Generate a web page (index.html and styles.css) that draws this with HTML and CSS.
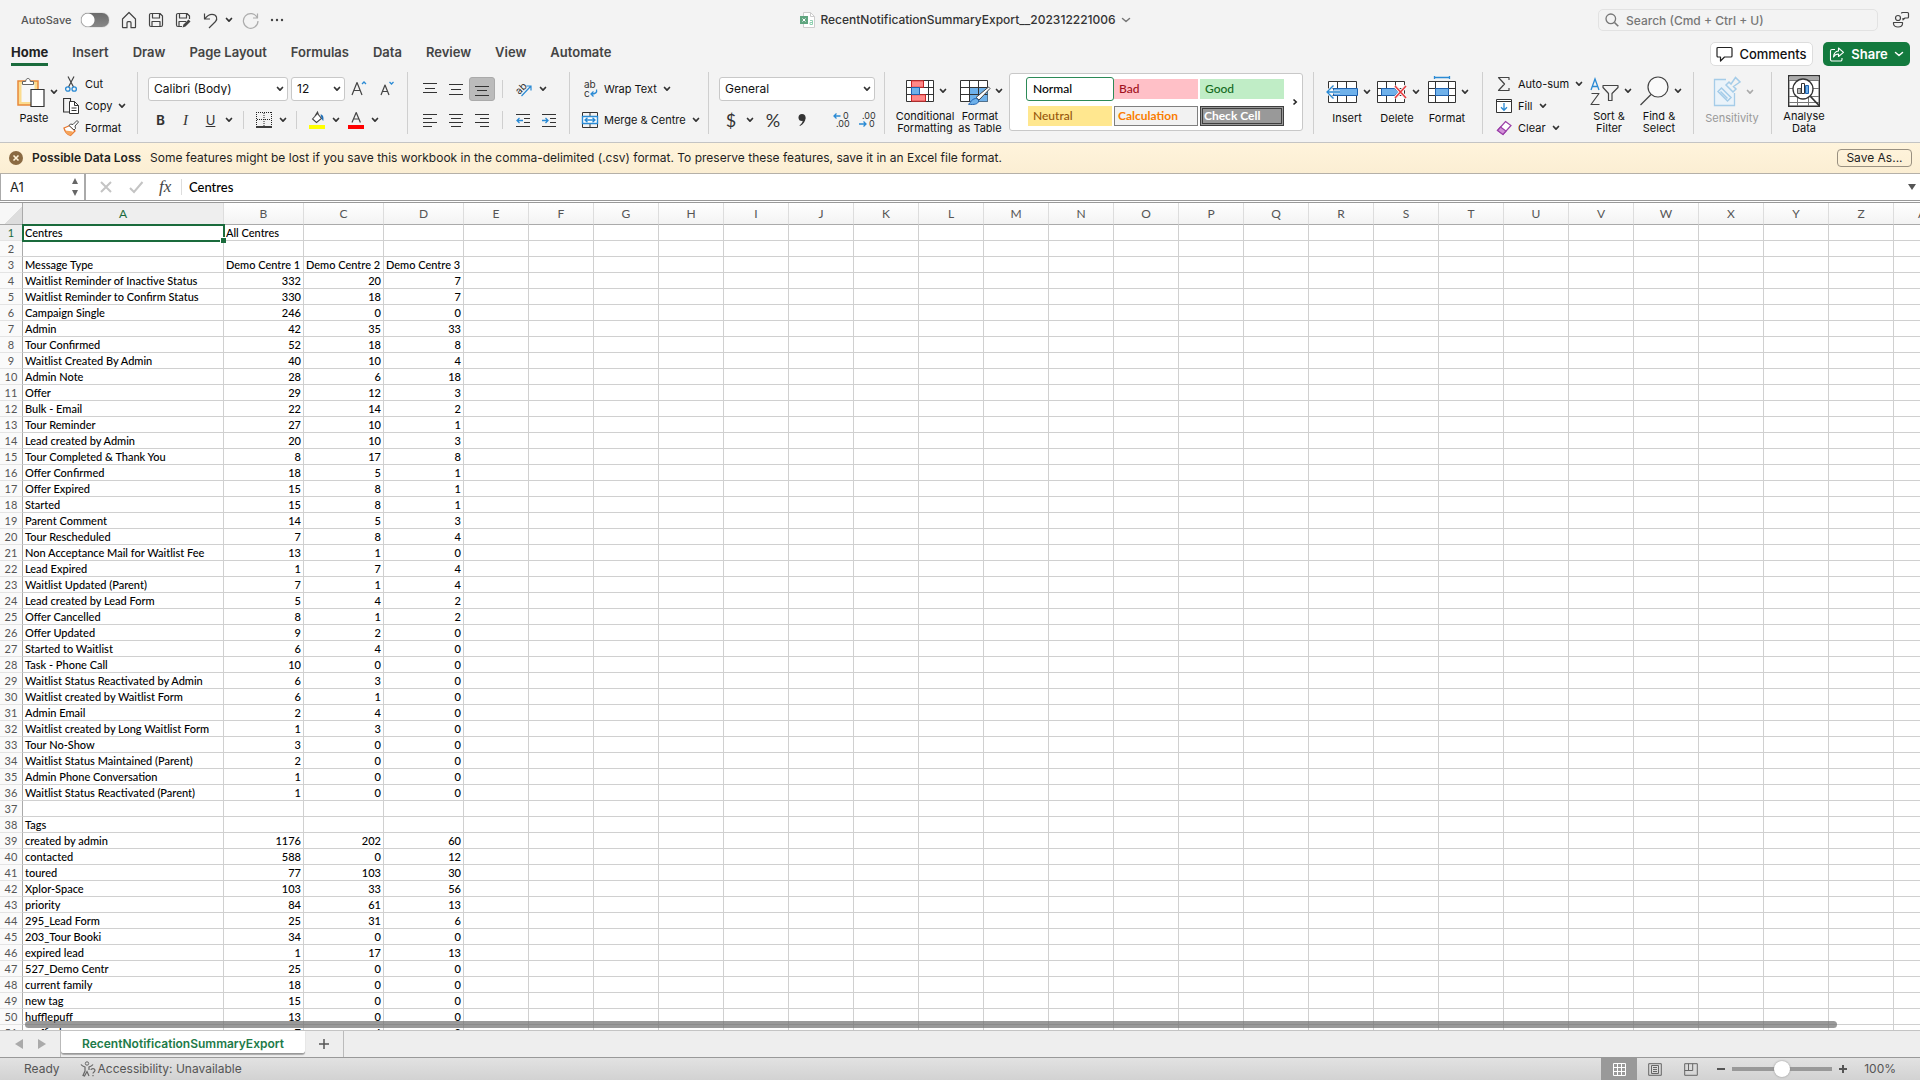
FILE: index.html
```html
<!DOCTYPE html>
<html lang="en">
<head>
<meta charset="utf-8">
<title>RecentNotificationSummaryExport__202312221006</title>
<link rel="stylesheet" href="styles.css">
</head>
<body>
<svg class="defs" aria-hidden="true">
  <symbol id="chev" viewBox="0 0 8 6"><path d="M1.500 1.500 4 4.200 6.500 1.500" fill="none" stroke="currentColor" stroke-width="1.700" stroke-linecap="round" stroke-linejoin="round"/></symbol>
  <symbol id="chev-thin" viewBox="0 0 10 6"><path d="M1.500 1.500 5 4.500 8.500 1.500" fill="none" stroke="currentColor" stroke-width="1.500" stroke-linecap="round" stroke-linejoin="round"/></symbol>
</svg>

<header class="titlebar">
  <div class="quick">
    <label class="autosave" for="autosave">AutoSave</label>
    <input class="toggle" id="autosave" type="checkbox">
    <button class="plain" aria-label="Home"><svg width="16" height="18" viewBox="0 0 16 18"><path d="M1.500 8 8 1.500 14.500 8v8a.7.7 0 0 1-.7.7H10v-5a1 1 0 0 0-1-1H7a1 1 0 0 0-1 1v5H2.200a.7.7 0 0 1-.7-.7z" class="ln"/></svg></button>
    <button class="plain" aria-label="Save"><svg width="16" height="16" viewBox="0 0 16 16"><path d="M1.500 3a1.500 1.500 0 0 1 1.500-1.500h9L14.500 4v9a1.500 1.500 0 0 1-1.500 1.500H3A1.500 1.500 0 0 1 1.500 13zM4.500 1.500V6h7V1.500M4 14.500v-5h8v5" class="ln"/></svg></button>
    <button class="plain" aria-label="Save as"><svg width="17" height="16" viewBox="0 0 17 16"><path d="M7 14.500H3A1.500 1.500 0 0 1 1.500 13V3A1.500 1.500 0 0 1 3 1.500h9L14.500 4v3M4.500 1.500V6h7V1.500M4 14.500v-5h7" class="ln"/><path d="M7.500 15.500l1-3 5-5 2 2-5 5z" fill="#444"/></svg></button>
    <button class="plain undo" aria-label="Undo"><svg width="15" height="17" viewBox="0 0 15 17"><path d="M1.500 1.500v5.500h5.500M1.700 6.800C4 3.800 6.500 2.300 9 2.300c4.800 0 6 4.700 3.300 7.500L6 16" class="ln"/></svg><svg class="chev"><use href="#chev"/></svg></button>
    <button class="plain dim" aria-label="Redo"><svg width="17" height="17" viewBox="0 0 17 17"><path d="M15.500 1.500V6H11M15.300 5.800A7.300 7.300 0 1 0 16 9" class="ln"/></svg></button>
    <button class="plain" aria-label="More"><svg width="14" height="4" viewBox="0 0 14 4" fill="#444"><circle cx="2" cy="2" r="1.200"/><circle cx="7" cy="2" r="1.200"/><circle cx="12" cy="2" r="1.200"/></svg></button>
  </div>
  <button class="doc">
    <svg width="15" height="16" viewBox="0 0 15 16"><path d="M3.500.5h7l4 4v11h-11z" fill="#fff" stroke="#ccc"/><path d="M10.500.5v4h4" fill="none" stroke="#ccc"/><path d="M10 8.500h2.500v4H10v-2h2.500" fill="none" stroke="#8fd0b0"/><rect y="4" width="8" height="8" fill="#5fa57f"/><path d="m2.500 6.500 3 3m0-3-3 3" stroke="#fff"/></svg>
    <span>RecentNotificationSummaryExport__202312221006</span>
    <svg class="chev-thin"><use href="#chev-thin"/></svg>
  </button>
  <div class="find">
    <div class="search">
      <svg width="14" height="14" viewBox="0 0 14 14"><circle cx="5.800" cy="5.800" r="4.800" fill="none" stroke="#777" stroke-width="1.300"/><path d="m9.500 9.500 3.800 3.800" stroke="#777" stroke-width="1.600"/></svg>
      <input type="search" aria-label="Search" placeholder="Search (Cmd + Ctrl + U)">
    </div>
    <button class="plain" aria-label="Presence"><svg width="18" height="18" viewBox="0 0 18 18"><circle cx="6" cy="7" r="2.500" class="ln"/><path d="M1.500 11.500h9v1c0 2.200-2 3.500-4.500 3.500s-4.500-1.300-4.500-3.500zM9.500 2.500a1 1 0 0 1 1-1h5a1 1 0 0 1 1 1V6a1 1 0 0 1-1 1H13l-2 1.800V7" class="ln"/></svg></button>
  </div>
</header>

<nav class="tabs">
  <a class="tab on" href="#home">Home</a><a class="tab" href="#insert">Insert</a><a class="tab" href="#draw">Draw</a><a class="tab" href="#layout">Page Layout</a><a class="tab" href="#formulas">Formulas</a><a class="tab" href="#data">Data</a><a class="tab" href="#review">Review</a><a class="tab" href="#view">View</a><a class="tab" href="#automate">Automate</a>
  <div class="actions">
    <button class="comments"><svg width="17" height="16" viewBox="0 0 17 16"><path d="M2 1.500h13a1 1 0 0 1 1 1V10a1 1 0 0 1-1 1H8.500L4.500 15v-4H2a1 1 0 0 1-1-1V2.500a1 1 0 0 1 1-1z" fill="none" stroke="#222" stroke-width="1.200" stroke-linejoin="round"/></svg>Comments</button>
    <button class="share"><svg width="16" height="15" viewBox="0 0 16 15"><path d="M6 2.500H3A1.500 1.500 0 0 0 1.500 4v8.500A1.500 1.500 0 0 0 3 14h8.500a1.500 1.500 0 0 0 1.500-1.500V11M9.500 1l5 4.300-5 4.200V7C7 7 5.500 8 4.500 10c.3-3.500 2-5.700 5-6z" fill="none" stroke="#fff" stroke-width="1.100" stroke-linejoin="round"/></svg>Share<svg class="chev-thin"><use href="#chev-thin"/></svg></button>
  </div>
</nav>

<section class="ribbon" aria-label="Home ribbon">
  <div class="group clipboard">
    <button class="big">
      <span class="pic"><svg width="28" height="32" viewBox="0 0 28 32"><rect x="1" y="5" width="20" height="24" fill="#fbdc8f" stroke="#e8883a" stroke-width="1.500"/><path d="M4.500 8h13v18h-13z" fill="#f7f7f7"/><path d="M5.500 8.500v-3h3.200c0-2 1-3 2.300-3s2.300 1 2.300 3h3.200v3z" fill="#fff" stroke="#666"/><path d="M14 13.500h13v17H14z" fill="#fff" stroke="#333" stroke-width="1.200"/></svg><svg class="chev"><use href="#chev"/></svg></span>
      <span>Paste</span>
    </button>
    <div class="stack">
      <button class="line"><svg width="16" height="18" viewBox="0 0 16 18"><path d="M5 1.500 10.500 12M11 1.500 5.500 12" stroke="#444" fill="none" stroke-width="1.200"/><circle cx="4.800" cy="14" r="2.200" fill="none" stroke="#2a8ad4" stroke-width="1.300"/><circle cx="11.200" cy="14" r="2.200" fill="none" stroke="#2a8ad4" stroke-width="1.300"/></svg>Cut</button>
      <button class="line"><svg width="16" height="18" viewBox="0 0 16 18"><path d="M6 15H.600V1.500H7.500V4" stroke="#333" fill="none" stroke-width="1.100"/><path d="M6.500 4.500h5l4 4v8h-9zM11.500 4.500v4h4M8.500 11h5M8.500 13.500h5" fill="#fff" stroke="#333"/></svg>Copy<svg class="chev"><use href="#chev"/></svg></button>
      <button class="line"><svg width="16" height="18" viewBox="0 0 16 18"><path d="M1 9 7 6.500l5 5.500-4.500 4.500C4.500 15.500 2 13 1 9z" fill="#fff" stroke="#e8772e" stroke-width="1.300"/><path d="M2 11.500c3 .5 6 0 8.500 1.500l-3 3.500c-2.500-.5-4.500-2.500-5.500-5z" fill="#f5a55c"/><path d="m6 6.500 1.500-1.500 2.500.500 4-4 1.500 1.500-3.500 4 .500 2.500-1.500 1.500z" fill="#fff" stroke="#444"/></svg>Format</button>
    </div>
  </div>

  <div class="group font">
    <div class="row">
      <span class="pick name"><select aria-label="Font"><option>Calibri (Body)</option></select><svg class="chev"><use href="#chev"/></svg></span>
      <span class="pick size"><select aria-label="Font size"><option>12</option></select><svg class="chev"><use href="#chev"/></svg></span>
      <button class="glyph wide" aria-label="Increase font size"><svg width="16" height="18" viewBox="0 0 16 18"><path d="M1 15 6 2.500 11 15M2.800 10.500h6.400" class="ln"/><path d="m11 4 2-2 2 2" fill="none" stroke="#2a8ad4" stroke-width="1.300"/></svg></button>
      <button class="glyph wide" aria-label="Decrease font size"><svg width="16" height="18" viewBox="0 0 16 18"><path d="M2 15 6 5l4 10M3.500 11.500h5" class="ln"/><path d="m10.500 2 2 2 2-2" fill="none" stroke="#2a8ad4" stroke-width="1.300"/></svg></button>
    </div>
    <div class="row">
      <button class="glyph b">B</button><button class="glyph i">I</button><button class="glyph u">U</button><button class="glyph tiny" aria-label="Underline styles"><svg class="chev"><use href="#chev"/></svg></button>
      <span class="sep"></span>
      <button class="glyph split" aria-label="Borders"><svg width="16" height="16" viewBox="0 0 16 16"><path d="M.500 0v14M0 .500h16M15.500 0v14M8 1v13M1 7.500h14" stroke="#222" stroke-dasharray="1 1" fill="none"/><path d="M0 15h16" stroke="#000" stroke-width="1.500"/></svg><svg class="chev"><use href="#chev"/></svg></button>
      <span class="sep"></span>
      <button class="glyph split" aria-label="Fill colour"><svg width="16" height="18" viewBox="0 0 16 18"><path d="m3.500 8 5-5.500 4 5-5 4zM6 5l2.500-4 1 3" fill="#fff" stroke="#444" stroke-width="1.100"/><path d="M11.500 3.500c2.500 0 3.500 2.500 2.800 6.500-1-1-2-2.500-1.800-3z" fill="#1f6fb8"/><path fill="#ff0" d="M0 14h16v4H0z"/></svg><svg class="chev"><use href="#chev"/></svg></button>
      <button class="glyph split" aria-label="Font colour"><svg width="16" height="18" viewBox="0 0 16 18"><path d="M4 11.500 8.200 1.500l4.200 10M5.500 8h5.500" class="ln"/><path fill="#f00" d="M0 14h16v4H0z"/></svg><svg class="chev"><use href="#chev"/></svg></button>
    </div>
  </div>

  <div class="group align">
    <div class="row">
      <button class="glyph al" aria-label="Top align"><svg width="14" height="14"><path d="M0 1.500h14M2 6.500h10M0 10.500h14" class="bar"/></svg></button>
      <button class="glyph al" aria-label="Middle align"><svg width="14" height="14"><path d="M0 2.500h14M2 7.500h10M0 12.500h14" class="bar"/></svg></button>
      <button class="glyph al on" aria-label="Bottom align"><svg width="14" height="14"><path d="M0 4.500h14M2 8.500h10M0 13.500h14" class="bar"/></svg></button>
      <span class="sep"></span>
      <button class="glyph split" aria-label="Orientation"><svg width="16" height="16" viewBox="0 0 16 16"><text x="0" y="12" font-size="10" transform="rotate(-45 4 9)" fill="#333">ab</text><path d="m5.500 15 9-9.500M10.500 5h4.500v4.500" fill="none" stroke="#2a8ad4" stroke-width="1.200"/></svg><svg class="chev"><use href="#chev"/></svg></button>
    </div>
    <div class="row">
      <button class="glyph al" aria-label="Align left"><svg width="14" height="14"><path d="M0 1.500h14M0 5.500h9M0 9.500h14M0 13.500h9" class="bar"/></svg></button>
      <button class="glyph al" aria-label="Centre"><svg width="14" height="14"><path d="M0 1.500h14M2 5.500h10M0 9.500h14M2 13.500h10" class="bar"/></svg></button>
      <button class="glyph al" aria-label="Align right"><svg width="14" height="14"><path d="M0 1.500h14M5 5.500h9M0 9.500h14M5 13.500h9" class="bar"/></svg></button>
      <span class="sep"></span>
      <button class="glyph al" aria-label="Decrease indent"><svg width="14" height="14"><path d="M0 1.500h14M8 5.500h6M8 9.500h6M0 13.500h14" class="bar"/><path d="M7 7.500H1M3.500 5 1 7.500 3.500 10" class="blue"/></svg></button>
      <button class="glyph al" aria-label="Increase indent"><svg width="14" height="14"><path d="M0 1.500h14M8 5.500h6M8 9.500h6M0 13.500h14" class="bar"/><path d="M0 7.500h6M3.500 5 6 7.500 3.500 10" class="blue"/></svg></button>
    </div>
  </div>

  <div class="group wrap">
    <button class="line"><svg width="16" height="18" viewBox="0 0 16 18"><text x="2" y="8" font-size="10" fill="#333">ab</text><text x="2" y="17" font-size="10" fill="#333">c</text><path d="M14.500 9.500c.8 3-1 4.500-5.500 4.500M11.500 11.500 9 14l2.500 2.500" class="blue"/></svg>Wrap Text<svg class="chev"><use href="#chev"/></svg></button>
    <button class="line"><svg width="16" height="16" viewBox="0 0 16 16"><path d="M.500.500h15v15H.500zM8 .500V4M8 12v3.500" fill="none" stroke="#333"/><path d="M.500 4.500h15v7H.500z" fill="#fff" stroke="#2a8ad4" stroke-width="1.400"/><path d="M3 8h10M5.500 5.800 3 8l2.500 2.200M10.500 5.800 13 8l-2.500 2.200" class="blue"/></svg>Merge &amp; Centre<svg class="chev"><use href="#chev"/></svg></button>
  </div>

  <div class="group number">
    <span class="pick fmt"><select aria-label="Number format"><option>General</option></select><svg class="chev"><use href="#chev"/></svg></span>
    <div class="row">
      <button class="glyph sym split">$<svg class="chev"><use href="#chev"/></svg></button>
      <button class="glyph sym">%</button>
      <button class="glyph" aria-label="Comma style"><svg width="10" height="14" viewBox="0 0 10 14"><circle cx="5" cy="4.500" r="3.500" fill="#333"/><path d="M8.500 4.500c0 4-2 6.500-5.500 8.500l-.5-.8C4.500 11 6 9 6 6z" fill="#333"/></svg></button>
      <span class="sep"></span>
      <button class="glyph dec" aria-label="Increase decimal"><svg width="16" height="16" viewBox="0 0 16 16"><text x="10" y="7" font-size="9" fill="#333">0</text><text x="3" y="15" font-size="9" fill="#333">.00</text><path d="M7.500 4H1M3.500 1.500 1 4l2.500 2.500" class="blue"/></svg></button>
      <button class="glyph dec" aria-label="Decrease decimal"><svg width="16" height="16" viewBox="0 0 16 16"><text x="3" y="7" font-size="9" fill="#333">.00</text><text x="10" y="15" font-size="9" fill="#333">0</text><path d="M0 12h7M4.500 9.500 7 12l-2.500 2.500" class="blue"/></svg></button>
    </div>
  </div>

  <div class="group styles">
    <button class="big w60">
      <span class="pic"><svg width="28" height="24" viewBox="0 0 28 24"><path d="M.500 1.500h27v21H.500zM.500 8.500h27M.500 15.500h27M5.500 1v22M22.500 1v22" fill="#fff" stroke="#333"/><path d="M5.500 1.800h12v6.500h-12zM5.500 15.700h14v6.500h-14z" fill="#f88" stroke="#c22"/><path d="M5.500 8.500h8v7h-8z" fill="#6fb1ea" stroke="#1f62b0"/></svg><svg class="chev"><use href="#chev"/></svg></span>
      <span>Conditional<br>Formatting</span>
    </button>
    <button class="big w50">
      <span class="pic"><svg width="30" height="28" viewBox="0 0 30 28"><path d="M.500 3.500h27v21H.500z" fill="#fff" stroke="#333"/><path d="M9.500 10.500h18v14h-18z" fill="#6fb1ea"/><path d="M.500 10.500h27M.500 17.500h27M9.500 3v22M18.500 3v22" fill="none" stroke="#333"/><path d="M28.500 10 30 11.500 19 23l-3-2.500z" fill="#fff" stroke="#444"/><path d="M15.500 21.500c2 0 3.500 1.500 3 3-.6 2.500-4 3.500-10 2.700 2.500-1.200 2-4.700 7-5.700z" fill="#6fb1ea" stroke="#1f62b0"/></svg><svg class="chev"><use href="#chev"/></svg></span>
      <span>Format<br>as Table</span>
    </button>
    <div class="gallery">
      <div class="swatches">
        <button class="sw normal">Normal</button><button class="sw bad">Bad</button><button class="sw good">Good</button>
        <button class="sw neutral">Neutral</button><button class="sw calc">Calculation</button><button class="sw check">Check Cell</button>
      </div>
      <button class="plain next" aria-label="More styles"><svg width="6" height="8" viewBox="0 0 6 8"><path d="M1.500 1.500 4.200 4 1.500 6.500" fill="none" stroke="#222" stroke-width="1.600"/></svg></button>
    </div>
  </div>

  <div class="group cells">
    <button class="big w50">
      <span class="pic"><svg width="32" height="24" viewBox="0 0 32 24"><path d="M2.500 1.500h28v21h-28zM2.500 8.500h28M2.500 15.500h28M11.500 1v22M20.500 1v22" fill="#fff" stroke="#333"/><path d="M7.500 8.500h24v7h-24z" fill="#6fb1ea" stroke="#1f62b0"/><path d="M14 12H1.500M7.500 5.500 1 12l6.500 6.500" fill="none" stroke="#f3f3f3" stroke-width="3"/><path d="M14 12H1.500M7.500 5.500 1 12l6.500 6.500" class="blue"/></svg><svg class="chev"><use href="#chev"/></svg></span>
      <span>Insert</span>
    </button>
    <button class="big w50">
      <span class="pic"><svg width="30" height="24" viewBox="0 0 30 24"><path d="M.500 1.500h27v21H.500zM.500 8.500h27M.500 15.500h27M9.500 1v22M18.500 1v22" fill="#fff" stroke="#333"/><path d="M4.500 8.500h13l4 3.500-4 3.500h-13z" fill="#6fb1ea" stroke="#1f62b0"/><path d="m18 6 11 12M29 6 18 18" stroke="#f3f3f3" stroke-width="3.500"/><path d="m18 6 11 12M29 6 18 18" stroke="#e8383d" stroke-width="1.500"/></svg><svg class="chev"><use href="#chev"/></svg></span>
      <span>Delete</span>
    </button>
    <button class="big w50">
      <span class="pic"><svg width="28" height="32" viewBox="0 0 28 32"><path d="M.500 5.500h27v21H.500zM.500 12.500h27M.500 19.500h27M7.500 5v22M20.500 5v22" fill="#fff" stroke="#333"/><path d="M7.500 12.500h13v7h-13z" fill="#6fb1ea" stroke="#1f62b0"/><path d="M6.500 1.500h15M6.500 0v3M21.500 0v3" class="blue"/></svg><svg class="chev"><use href="#chev"/></svg></span>
      <span>Format</span>
    </button>
  </div>

  <div class="group editing">
    <div class="stack">
      <button class="line"><svg width="16" height="16" viewBox="0 0 16 16"><path d="M13 4V1.500H2.500L8.500 8l-6 6.500H13V12" class="ln"/></svg>Auto-sum<svg class="chev"><use href="#chev"/></svg></button>
      <button class="line"><svg width="16" height="16" viewBox="0 0 16 16"><path d="M.500 1.500h15v13H.500z" fill="#fff" stroke="#333"/><path d="M.500 3.500h15" stroke="#333"/><path d="M8 5v7M5 9.300l3 3 3-3" class="blue"/></svg>Fill<svg class="chev"><use href="#chev"/></svg></button>
      <button class="line"><svg width="16" height="16" viewBox="0 0 16 16"><path d="m9.500 1.500 5.500 4-8 9-5.500-4z" fill="#fff" stroke="#9b3fa8" stroke-width="1.200"/><path d="m4.500 7 5.500 4-3 3.500-5.500-4z" fill="#d292d8" stroke="#9b3fa8" stroke-width="1.200"/></svg>Clear<svg class="chev"><use href="#chev"/></svg></button>
    </div>
    <button class="big w50">
      <span class="pic"><svg width="29" height="30" viewBox="0 0 29 30"><path d="m1 14 4-11 4 11M2.500 10.500h5" fill="none" stroke="#2a8ad4" stroke-width="1.300"/><path d="M1.500 17.500H9L1 28.500h8.500" class="ln"/><path d="M13 9.500h15v2l-6 6v7h-3.500v-7l-5.500-6z" class="ln"/></svg><svg class="chev"><use href="#chev"/></svg></span>
      <span>Sort &amp;<br>Filter</span>
    </button>
    <button class="big w50">
      <span class="pic"><svg width="29" height="30" viewBox="0 0 29 30"><circle cx="18" cy="11" r="10" fill="#fff" fill-opacity=".6" stroke="#444" stroke-width="1.200"/><path d="M11 18.500.500 29" class="ln"/></svg><svg class="chev"><use href="#chev"/></svg></span>
      <span>Find &amp;<br>Select</span>
    </button>
  </div>

  <div class="group sens">
    <button class="big w50" disabled>
      <span class="pic"><svg width="28" height="32" viewBox="0 0 28 32"><path d="M13 3.500H1.500v26h20V17" fill="#eaf3fa" stroke="#a5cce8" stroke-width="1.300"/><path d="M5 15.500 8.500 12l9.500 9.500-3.500 3.500zM7.500 15.500l7 7M10 13.500l6.500 6.500M13 9l3-3 2 2 4.500-6.500 4.500 4.500-6.500 4.500 2.500 2.500-3 3z" fill="none" stroke="#a5cce8" stroke-width="1.500"/></svg><svg class="chev"><use href="#chev"/></svg></span>
      <span>Sensitivity</span>
    </button>
  </div>

  <div class="group analyse">
    <button class="big w50">
      <span class="pic"><svg width="32" height="32" viewBox="0 0 32 32"><path d="M.700.700h30.600v30.600H.700z" fill="#fff" stroke="#333" stroke-width="1.400"/><path d="M1.500 1.500h29v4h-29z" fill="#aaa"/><path d="M1 5.500h30M1 13.500h30M1 21.500h30M1 27.500h30M9.500 21v10M20.500 21v10" stroke="#777"/><circle cx="15" cy="14" r="10" fill="#fff" stroke="#333" stroke-width="1.300"/><path d="m22.500 21.500 9 9.500" stroke="#333" stroke-width="1.800"/><path d="M9.500 13.500h3.500v5H9.500z" fill="#bbb" stroke="#555"/><path d="M13.500 8.500h3v10h-3z" fill="#fff" stroke="#333"/><path d="M17.500 10.500h3v8h-3z" fill="#6fb1ea" stroke="#1f62b0"/></svg></span>
      <span>Analyse<br>Data</span>
    </button>
  </div>
</section>

<div class="warning" role="alert">
  <button class="plain" aria-label="Dismiss"><svg width="14" height="14" viewBox="0 0 14 14"><circle cx="7" cy="7" r="7" fill="#8a6a42"/><path d="m4.500 4.500 5 5m0-5-5 5" stroke="#fff3d9" stroke-width="1.600"/></svg></button>
  <strong>Possible Data Loss</strong>
  <span>Some features might be lost if you save this workbook in the comma-delimited (.csv) format. To preserve these features, save it in an Excel file format.</span>
  <button class="saveas">Save As...</button>
</div>

<div class="formula">
  <div class="namebox">
    <input type="text" aria-label="Name box" value="A1">
    <svg width="8" height="18" viewBox="0 0 8 18"><path d="M4 0 7 6H1zM4 18l3-6H1z" fill="#666"/></svg>
  </div>
  <div class="tools">
    <button class="plain" aria-label="Cancel"><svg width="14" height="14" viewBox="0 0 14 14"><path d="m2 2 10 10M12 2 2 12" stroke="#c4c4c4" stroke-width="2"/></svg></button>
    <button class="plain" aria-label="Enter"><svg width="14" height="14" viewBox="0 0 14 14"><path d="m1 8 4 4 8.500-10" fill="none" stroke="#c4c4c4" stroke-width="2"/></svg></button>
    <button class="plain fx">fx</button>
  </div>
  <input class="entry" type="text" aria-label="Formula bar" value="Centres">
  <button class="plain expand" aria-label="Expand"><svg width="8" height="6" viewBox="0 0 8 6"><path d="M0 0h8L4 6z" fill="#555"/></svg></button>
</div>

<main class="sheet">
  <table class="grid" id="grid"></table>
  <div class="hscroll"></div>
</main>

<footer>
  <div class="sheets">
    <div class="arrows">
      <button class="plain" aria-label="Previous sheet"><svg width="8" height="10"><path d="M8 0v10L0 5z" fill="#aaa"/></svg></button>
      <button class="plain" aria-label="Next sheet"><svg width="8" height="10"><path d="M0 0v10l8-5z" fill="#aaa"/></svg></button>
    </div>
    <button class="sheet-tab">RecentNotificationSummaryExport</button>
    <button class="add" aria-label="New sheet"><svg width="10" height="10"><path d="M5 0v10M0 5h10" stroke="#555" stroke-width="1.500"/></svg></button>
  </div>
  <div class="status">
    <span>Ready</span>
    <span class="acc"><svg width="16" height="16" viewBox="0 0 16 16"><circle cx="7" cy="2.500" r="1.700" fill="none" stroke="#666"/><path d="M1 3.500c1 1.500 2.500 2 4 2.500v4l-2 4.500 1.500.5L7 10.500l2 4.500M13 3.500c-1 1.500-2.500 2-4 2.500v3M11 9c0-2 4-2 4 .3 0 1.700-2 1.500-2 3.200M13 14v1.300" fill="none" stroke="#666" stroke-width="1.200"/></svg>Accessibility: Unavailable</span>
    <div class="views">
      <button class="view on" aria-label="Normal view"><svg width="13" height="13"><path d="M.500.500h12v12H.500zM.500 4.500h12M.500 8.500h12M4.500.500v12M8.500.500v12" fill="none" stroke="#fff"/></svg></button>
      <button class="view" aria-label="Page layout view"><svg width="14" height="13"><path d="M.700.700h12.600v11.600H.700zM3.500 2.500h7v8h-7zM5 4.500h4M5 6.500h4M5 8.500h4" fill="none" stroke="#666"/></svg></button>
      <button class="view" aria-label="Page break view"><svg width="14" height="13"><path d="M.700.700h12.600v11.600H.700zM.700 7.500h8V.700M4.500.700v6.800" fill="none" stroke="#666"/></svg></button>
    </div>
    <div class="zoom">
      <button class="plain" aria-label="Zoom out"><svg width="8" height="8"><path d="M0 4h8" stroke="#555" stroke-width="2"/></svg></button>
      <input type="range" aria-label="Zoom" min="0" max="200" value="100">
      <button class="plain" aria-label="Zoom in"><svg width="8" height="8"><path d="M0 4h8M4 0v8" stroke="#555" stroke-width="2"/></svg></button>
      <span>100%</span>
    </div>
  </div>
</footer>
<script src="grid.js"></script>
</body>
</html>
```
FILE: styles.css
```css
* { box-sizing: border-box; }
body {
  margin: 0;
  height: 100vh;
  display: flex;
  flex-direction: column;
  overflow: hidden;
  background: #f3f3f3;
  color: #1f1f1f;
  font: 11px/12px Inter, "Liberation Sans", sans-serif;
}
button, input, select { font: inherit; color: inherit; margin: 0; }
button { border: 0; padding: 0; background: none; display: flex; align-items: center; }
svg { flex: none; display: block; overflow: visible; }
.defs { position: absolute; width: 0; height: 0; }
.ln { fill: none; stroke: #444; stroke-width: 1.2; stroke-linejoin: round; }
.bar { stroke: #333; fill: none; }
.blue { fill: none; stroke: #2a8ad4; stroke-width: 1.3; }
.chev { width: 8px; height: 6px; color: #333; }
.chev-thin { width: 10px; height: 6px; }

/* title bar */
.titlebar {
  flex: none;
  height: 40px;
  display: grid;
  grid-template-columns: 1fr auto 1fr;
  align-items: center;
  padding: 0 10px 0 21px;
}
.quick { display: flex; align-items: center; }
.quick .plain { margin-right: 11px; }
.quick .undo { gap: 7px; margin-right: 9px; }
.autosave { color: #555; font-weight: 500; width: 60px; }
.dim { opacity: .4; }
.toggle {
  appearance: none;
  width: 28px;
  height: 14px;
  margin-right: 12px;
  border-radius: 7px;
  background: radial-gradient(circle at 7px 7px, #fff 6px, transparent 7px), linear-gradient(#6b6b6b, #888);
  box-shadow: 0 0 1px #666;
}
.doc { gap: 5px; font-size: 12px; font-weight: 500; color: #333; }
.doc .chev-thin { color: #777; }
.find { display: flex; align-items: center; justify-content: flex-end; gap: 14px; }
.search {
  width: 280px;
  height: 22px;
  display: flex;
  align-items: center;
  gap: 7px;
  padding: 0 6px;
  border: 1px solid #e2e2e2;
  border-radius: 5px;
}
.search input { flex: 1; border: 0; background: none; padding: 0; font-size: 12px; font-weight: 500; outline: 0; }
.search input::placeholder { color: #777; }

/* ribbon tabs */
.tabs { flex: none; height: 32px; display: flex; gap: 24px; padding: 0 10px 0 11px; }
.tab {
  height: 26px;
  padding-top: 4px;
  font-size: 13px;
  line-height: 16px;
  font-weight: 600;
  color: #444;
  text-decoration: none;
}
.tab.on { font-weight: 700; color: #222; border-bottom: 3px solid #1a6b3c; }
.actions { margin-left: auto; display: flex; gap: 10px; padding-top: 2px; }
.actions button { height: 24px; border-radius: 5px; font-size: 13px; font-weight: 500; justify-content: center; gap: 6px; }
.actions .comments { width: 103px; background: #fff; border: 1px solid #ddd; color: #111; }
.actions .share { width: 87px; background: #137a3e; color: #fff; font-weight: 600; }

/* ribbon */
.ribbon { flex: none; height: 71px; display: flex; border-bottom: 1px solid #c4c4c4; }
.group { flex: none; height: 62px; display: flex; border-right: 1px solid #cfcfcf; }
.big { flex-direction: column; width: 50px; text-align: center; font-size: 11px; line-height: 12px; color: #111; }
.big span:last-child { white-space: nowrap; }
.big .pic { height: 40px; display: flex; align-items: center; gap: 5px; padding-left: 3px; }
.w60 { width: 60px; }
.big:disabled { color: #999; }
.big:disabled .chev { color: #aaa; }
.stack { display: flex; flex-direction: column; padding-top: 1px; }
.line { flex: none; height: 22px; gap: 6px; font-size: 11px; color: #111; white-space: nowrap; }
.row { display: flex; align-items: center; height: 24px; }
.glyph { width: 26px; height: 24px; justify-content: center; color: #333; }
.glyph.split { width: auto; gap: 7px; }
.sep { width: 1px; height: 18px; background: #cfcfcf; }
.pick { display: grid; align-items: center; height: 24px; background: #fff; border: 1px solid #c8c8c8; border-radius: 3px; }
.pick select { grid-area: 1 / 1; appearance: none; border: 0; background: none; padding: 0 5px; font-size: 12px; color: #111; width: 100%; height: 22px; }
.pick .chev { grid-area: 1 / 1; justify-self: end; margin-right: 3px; pointer-events: none; }

.clipboard { width: 138px; padding-left: 11px; gap: 6px; }
.clipboard .big { width: 46px; }
.clipboard .pic { padding-left: 6px; }
.font { width: 270px; flex-direction: column; gap: 7px; padding: 5px 0 0 10px; }
.font .glyph { width: 25px; }
.font .name { width: 140px; margin-right: 3px; }
.font .size { width: 54px; }
.font .wide { width: 28px; }
.font .b { font-weight: 700; font-size: 13px; }
.font .i { font: italic 15px "Liberation Serif", serif; }
.font .u { font-size: 13px; text-decoration: underline; }
.font .tiny { width: 12px; margin-right: 8px; }
.font .split { width: auto; margin-left: 12px; }
.font .split + .sep { margin-left: 9px; }
.font .split + .split { margin-left: 8px; }
.align { width: 162px; flex-direction: column; gap: 7px; padding: 5px 0 0 9px; }
.align .on { background: #bbb; border: 1px solid #aaa; border-radius: 3px; }
.align .sep { margin: 0 7px; }
.align .split { margin-left: 6px; }
.wrap { width: 139px; flex-direction: column; padding: 6px 0 0 12px; gap: 9px; }
.number { width: 176px; flex-direction: column; gap: 7px; padding: 5px 9px 0 10px; }
.number .row { gap: 7px; padding-left: 6px; }
.number .sym { font: 18px/24px Lato, sans-serif; width: 18px; }
.number .sym.split { width: 30px; gap: 10px; }
.number .glyph { flex: none; width: 22px; }
.number .sep { margin-right: 4px; }
.number .dec { width: 19px; }
.styles { width: 429px; padding-left: 10px; }
.gallery {
  height: 58px;
  margin: 1px 0 0 4px;
  width: 294px;
  display: flex;
  align-items: center;
  padding-left: 18px;
  background: #fff;
  border: 1px solid #c8c8c8;
  border-radius: 3px;
}
.styles .w60 { width: 60px; }
.swatches { display: grid; grid-template-columns: repeat(3, 84px); gap: 7px 2px; }
.sw { height: 20px; padding-left: 5px; font: 500 12px/14px Lato, sans-serif; }
.normal { background: #fff; color: #000; outline: 1px solid #2c8a57; outline-offset: 1px; border-radius: 1px; }
.bad { background: #ffc0c7; color: #a01020; }
.good { background: #c0edc6; color: #146b1e; }
.neutral { background: #ffe78f; color: #96560a; }
.calc { background: #f2f2f2; color: #fa7d00; border: 1px solid #7f7f7f; font-weight: 700; padding-left: 3px; }
.check { background: #999; color: #fff; border: 3px double #3f3f3f; font-weight: 700; padding-left: 1px; }
.next { margin-left: 8px; }
.cells { width: 169px; padding-left: 8px; }
.editing { width: 211px; padding-left: 13px; }
.editing .stack { width: 88px; }
.sens { width: 78px; padding-left: 13px; }
.analyse { border: 0; padding-left: 7px; }
.analyse .pic { padding-left: 0; }

/* warning bar */
.warning {
  flex: none;
  height: 31px;
  display: flex;
  align-items: center;
  gap: 9px;
  padding: 0 8px 0 9px;
  background: linear-gradient(#fff4dc, #fbeed3);
  border-bottom: 1px solid #b5b0a8;
  font-size: 12px;
}
.warning strong { font-weight: 600; }
.saveas { margin-left: auto; width: 75px; height: 18px; justify-content: center; border: 1px solid #999080; border-radius: 4px; }

/* formula bar */
.formula { flex: none; height: 29px; display: flex; align-items: stretch; background: #fff; border-bottom: 3px double #999; }
.namebox { width: 86px; display: flex; align-items: center; padding: 0 5px 0 9px; border: solid #aaa; border-width: 0 2px 0 1px; }
.namebox input { flex: 1; width: 0; border: 0; padding: 0; font-size: 13px; outline: 0; }
.tools { width: 95px; display: flex; align-items: center; gap: 16px; padding-left: 13px; }
.fx { font: italic 17px "Liberation Serif", serif; color: #444; }
.entry { flex: 1; border: 0; border-left: 1px solid #ddd; padding: 0 7px; margin: 5px 0; font: 500 13px/16px Lato, sans-serif; color: #000; outline: 0; }
.expand { margin-right: 4px; }

/* grid */
.sheet { flex: 1; min-height: 0; position: relative; overflow: hidden; background: #fff; border-bottom: 1px solid #c4c4c4; }
.grid { table-layout: fixed; border-collapse: separate; border-spacing: 0; width: 1959px; font: 500 11px/15px Lato, sans-serif; color: #000; }
.grid th { padding: 0; font-weight: 400; font-size: 12px; color: #555; }
.grid thead th { height: 22px; background: linear-gradient(#fff, #f3f3f3); border-right: 1px solid #ddd; border-bottom: 1px solid #aaa; }
.grid thead .corner { background: linear-gradient(135deg, #f7f7f7 60%, #ddd 60%); border-right-color: #aaa; }
.grid tbody th { border-right: 1px solid #aaa; border-bottom: 1px solid #e4e4e4; background: #fafafa; font-size: 11px; }
.grid .cur { color: #1a6b3c; background: #eee; }
.grid td { height: 16px; padding: 0 2px; border-right: 1px solid #d0d0d0; border-bottom: 1px solid #d0d0d0; white-space: nowrap; }
.grid .num { text-align: right; }
.grid .selected { outline: 2px solid #1a6b3c; outline-offset: -1px; position: relative; }
.grid .selected::after { content: ""; position: absolute; right: -3px; bottom: -3px; width: 5px; height: 5px; background: #1a6b3c; border: solid #fff; border-width: 1px 0 0 1px; box-sizing: content-box; }
.hscroll { position: absolute; left: 25px; right: 83px; bottom: 2px; height: 7px; border-radius: 4px; background: rgba(110, 110, 110, .7); }

/* sheet tabs and status */
.sheets { height: 26px; display: flex; background: #eee; }
.arrows { width: 61px; display: flex; align-items: center; gap: 15px; padding-left: 15px; border-right: 1px solid #bbb; }
.sheet-tab { width: 244px; height: 23px; padding-top: 3px; justify-content: center; background: #fff; color: #217a48; font-size: 12px; font-weight: 600; border-bottom: 1px solid #999; border-radius: 0 0 3px 3px; box-shadow: 0 1px 1px #aaa; }
.add { width: 39px; justify-content: center; border-right: 1px solid #bbb; }
.status { height: 23px; display: flex; align-items: center; padding: 0 24px; border-top: 1px solid #999; background: linear-gradient(#e2e2e2, #d2d2d2); color: #555; font-size: 12px; }
.acc { display: flex; align-items: center; gap: 2px; margin-left: 20px; }
.views { display: flex; margin-left: auto; }
.view { width: 36px; height: 23px; justify-content: center; }
.view.on { background: #999; }
.zoom { display: flex; align-items: center; gap: 7px; margin-left: 8px; }
.zoom input { appearance: none; width: 100px; height: 16px; background: linear-gradient(#999, #999) center / 100% 4px no-repeat; }
.zoom input::-webkit-slider-thumb { appearance: none; width: 16px; height: 16px; border-radius: 50%; background: #fff; box-shadow: 0 0 2px #888; }
.zoom span { margin-left: 10px; }
```
FILE: grid.js
```js
const rows = [
  ["Centres", "All Centres"],
  [],
  ["Message Type", "Demo Centre 1", "Demo Centre 2", "Demo Centre 3"],
  ["Waitlist Reminder of Inactive Status", 332, 20, 7],
  ["Waitlist Reminder to Confirm Status", 330, 18, 7],
  ["Campaign Single", 246, 0, 0],
  ["Admin", 42, 35, 33],
  ["Tour Confirmed", 52, 18, 8],
  ["Waitlist Created By Admin", 40, 10, 4],
  ["Admin Note", 28, 6, 18],
  ["Offer", 29, 12, 3],
  ["Bulk - Email", 22, 14, 2],
  ["Tour Reminder", 27, 10, 1],
  ["Lead created by Admin", 20, 10, 3],
  ["Tour Completed & Thank You", 8, 17, 8],
  ["Offer Confirmed", 18, 5, 1],
  ["Offer Expired", 15, 8, 1],
  ["Started", 15, 8, 1],
  ["Parent Comment", 14, 5, 3],
  ["Tour Rescheduled", 7, 8, 4],
  ["Non Acceptance Mail for Waitlist Fee", 13, 1, 0],
  ["Lead Expired", 1, 7, 4],
  ["Waitlist Updated (Parent)", 7, 1, 4],
  ["Lead created by Lead Form", 5, 4, 2],
  ["Offer Cancelled", 8, 1, 2],
  ["Offer Updated", 9, 2, 0],
  ["Started to Waitlist", 6, 4, 0],
  ["Task - Phone Call", 10, 0, 0],
  ["Waitlist Status Reactivated by Admin", 6, 3, 0],
  ["Waitlist created by Waitlist Form", 6, 1, 0],
  ["Admin Email", 2, 4, 0],
  ["Waitlist created by Long Waitlist Form", 1, 3, 0],
  ["Tour No-Show", 3, 0, 0],
  ["Waitlist Status Maintained (Parent)", 2, 0, 0],
  ["Admin Phone Conversation", 1, 0, 0],
  ["Waitlist Status Reactivated (Parent)", 1, 0, 0],
  [],
  ["Tags"],
  ["created by admin", 1176, 202, 60],
  ["contacted", 588, 0, 12],
  ["toured", 77, 103, 30],
  ["Xplor-Space", 103, 33, 56],
  ["priority", 84, 61, 13],
  ["295_Lead Form", 25, 31, 6],
  ["203_Tour Booki", 34, 0, 0],
  ["expired lead", 1, 17, 13],
  ["527_Demo Centr", 25, 0, 0],
  ["current family", 18, 0, 0],
  ["new tag", 15, 0, 0],
  ["hufflepuff", 13, 0, 0],
  ["muffin l", 7, 4, 0]
];
const letters = [..."ABCDEFGHIJKLMNOPQRSTUVWXYZ", "AA"];
const widths = [201, 80, 80, 80];
const grid = document.getElementById("grid");

const add = (parent, tag, text = "", cls = "") => {
  const el = document.createElement(tag);
  el.textContent = text;
  if (cls) el.className = cls;
  parent.append(el);
  return el;
};

const cols = add(grid, "colgroup");
add(cols, "col").style.width = "23px";
letters.forEach((_, i) => { add(cols, "col").style.width = (widths[i] || 65) + "px"; });

const head = add(add(grid, "thead"), "tr");
add(head, "th", "", "corner");
letters.forEach((l, i) => add(head, "th", l, i === 0 ? "cur" : ""));

const body = add(grid, "tbody");
rows.forEach((row, r) => {
  const tr = add(body, "tr");
  add(tr, "th", r + 1, r === 0 ? "cur" : "");
  letters.forEach((_, c) => {
    const v = row[c] ?? "";
    const cls = r === 0 && c === 0 ? "selected" : typeof v === "number" ? "num" : "";
    add(tr, "td", v, cls);
  });
});
```
